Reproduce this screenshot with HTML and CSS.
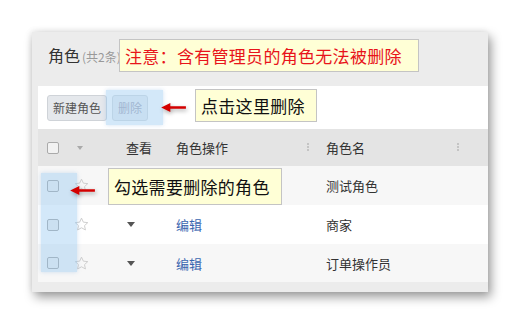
FILE: index.html
```html
<!DOCTYPE html>
<html lang="zh-CN">
<head>
    <meta charset="UTF-8">
    <title>角色管理</title>
    <link rel="stylesheet" href="styles.css">
</head>
<body>
    <div class="page">
        <div class="panel">
            <div class="panel-head">
                <span class="title">角色</span><span class="count">(共2条)</span>
            </div>
            <div class="toolbar">
                <button class="btn">新建角色</button>
                <button class="btn disabled">删除</button>
            </div>
            <div class="grid">
                <div class="row head">
                    <div class="cell"><span class="check"></span></div>
                    <div class="cell"><span class="caret light"></span></div>
                    <div class="cell">查看</div>
                    <div class="cell split">角色操作<span class="sep"></span></div>
                    <div class="cell split last">角色名<span class="sep"></span></div>
                </div>
                <div class="row alt">
                    <div class="cell"><span class="check"></span></div>
                    <div class="cell"><svg class="star" viewBox="0 0 16 16"><path d="M8 1.2l2 4.3 4.7.5-3.5 3.2 1 4.6L8 11.5l-4.2 2.3 1-4.6L1.3 6l4.7-.5z"/></svg></div>
                    <div class="cell"></div>
                    <div class="cell"></div>
                    <div class="cell">测试角色</div>
                </div>
                <div class="row">
                    <div class="cell"><span class="check"></span></div>
                    <div class="cell"><svg class="star" viewBox="0 0 16 16"><path d="M8 1.2l2 4.3 4.7.5-3.5 3.2 1 4.6L8 11.5l-4.2 2.3 1-4.6L1.3 6l4.7-.5z"/></svg></div>
                    <div class="cell"><span class="caret"></span></div>
                    <div class="cell"><a class="link">编辑</a></div>
                    <div class="cell">商家</div>
                </div>
                <div class="row alt">
                    <div class="cell"><span class="check"></span></div>
                    <div class="cell"><svg class="star" viewBox="0 0 16 16"><path d="M8 1.2l2 4.3 4.7.5-3.5 3.2 1 4.6L8 11.5l-4.2 2.3 1-4.6L1.3 6l4.7-.5z"/></svg></div>
                    <div class="cell"><span class="caret"></span></div>
                    <div class="cell"><a class="link">编辑</a></div>
                    <div class="cell">订单操作员</div>
                </div>
            </div>
        </div>

        <!-- annotations -->
        <div class="highlight hl-delete"></div>
        <div class="highlight hl-check"></div>
        <div class="note red note-top">注意：含有管理员的角色无法被删除</div>
        <div class="note note-delete">点击这里删除</div>
        <div class="note note-check">勾选需要删除的角色</div>
        <svg class="arrow arrow-delete" viewBox="0 0 30 12"><path d="M1 6l10-5v3.6h17v2.8H11V11z"/></svg>
        <svg class="arrow arrow-check" viewBox="0 0 30 12"><path d="M1 6l10-5v3.6h17v2.8H11V11z"/></svg>
    </div>
</body>
</html>
```

FILE: styles.css
```css
* {
    margin: 0;
    padding: 0;
    box-sizing: border-box;
}

body {
    font-family: "Noto Sans CJK SC", "Noto Sans", sans-serif;
    background: #fff;
    color: #333;
}

.page {
    position: relative;
    width: 520px;
    height: 325px;
    padding: 32px 0 0 32px;
}

.panel {
    width: 456px;
    height: 260px;
    background: #ececec;
    padding-left: 6px;
    box-shadow: 3px 5px 10px rgba(0,0,0,0.4), -1px -1px 6px rgba(0,0,0,0.08);
}

.panel-head {
    height: 54px;
    padding: 14px 0 0 10px;
    line-height: 18px;
}

.title {
    font-size: 16px;
    color: #333;
}

.count {
    margin-left: 2px;
    font-size: 12px;
    color: #999;
}

.toolbar {
    height: 43px;
    background: #fff;
    display: flex;
    align-items: center;
    gap: 5px;
    padding-left: 9px;
}

.btn {
    height: 26px;
    padding: 0 5px;
    font-family: inherit;
    font-size: 12px;
    color: #555;
    background: #e5e8ec;
    border: 1px solid #cfd3d8;
    border-radius: 3px;
}

.btn.disabled {
    color: #aab;
    background: #edf0f3;
    border-color: #d8dce0;
}

.row {
    display: grid;
    grid-template-columns: 30px 50px 50px 150px 170px;
    height: 39px;
    background: #fff;
    font-size: 13px;
}

.row.head {
    height: 37px;
    background: #e4e4e4;
}

.row.alt {
    background: #f7f7f7;
}

.row:last-child {
    height: 38px;
}

.cell {
    display: flex;
    align-items: center;
    padding-left: 8px;
}

.cell:first-child {
    padding-left: 9px;
}

.cell:nth-child(2) {
    padding-left: 6px;
}

.cell.split {
    justify-content: space-between;
    padding-right: 9px;
}

.cell.split.last {
    padding-right: 29px;
}

.sep {
    width: 2px;
    height: 9px;
    background: repeating-linear-gradient(#c4c4c4 0 2px, transparent 2px 3px);
}

.check {
    width: 12px;
    height: 12px;
    border: 1px solid #aaa;
    border-radius: 2px;
    background: #f2f2f2;
}

.caret {
    width: 0;
    height: 0;
    margin-left: 1px;
    border-left: 4px solid transparent;
    border-right: 4px solid transparent;
    border-top: 5px solid #555;
}

.caret.light {
    margin-left: 3px;
    border-left-width: 3.5px;
    border-right-width: 3.5px;
    border-top: 4px solid #aaa;
}

.star {
    width: 15px;
    height: 15px;
    fill: none;
    stroke: #ccc;
    stroke-width: 1;
}

.link {
    color: #3a66b0;
}

.highlight {
    position: absolute;
    background: rgba(150, 200, 240, 0.42);
    box-shadow: 0 0 4px rgba(120, 170, 220, 0.35);
}

.hl-delete {
    left: 106px;
    top: 90px;
    width: 57px;
    height: 35px;
}

.hl-check {
    left: 41px;
    top: 173px;
    width: 36px;
    height: 99px;
}

.note {
    position: absolute;
    background: #ffffd6;
    border: 1px solid #c4c4c4;
    font-size: 17px;
    line-height: 31px;
    padding: 0 5px;
    color: #111;
    letter-spacing: 0.3px;
}

.note.red {
    color: #e8141b;
}

.note-top {
    left: 119px;
    top: 39px;
    width: 300px;
    height: 33px;
}

.note-delete {
    left: 195px;
    top: 89px;
    width: 122px;
    height: 33px;
}

.note-check {
    left: 108px;
    top: 168px;
    width: 174px;
    height: 37px;
    line-height: 35px;
}

.arrow {
    position: absolute;
    width: 28px;
    height: 11px;
    fill: #d40000;
    filter: drop-shadow(1px 2px 2px rgba(0,0,0,0.35));
}

.arrow-delete {
    left: 160px;
    top: 102px;
}

.arrow-check {
    left: 69px;
    top: 185px;
}
```
